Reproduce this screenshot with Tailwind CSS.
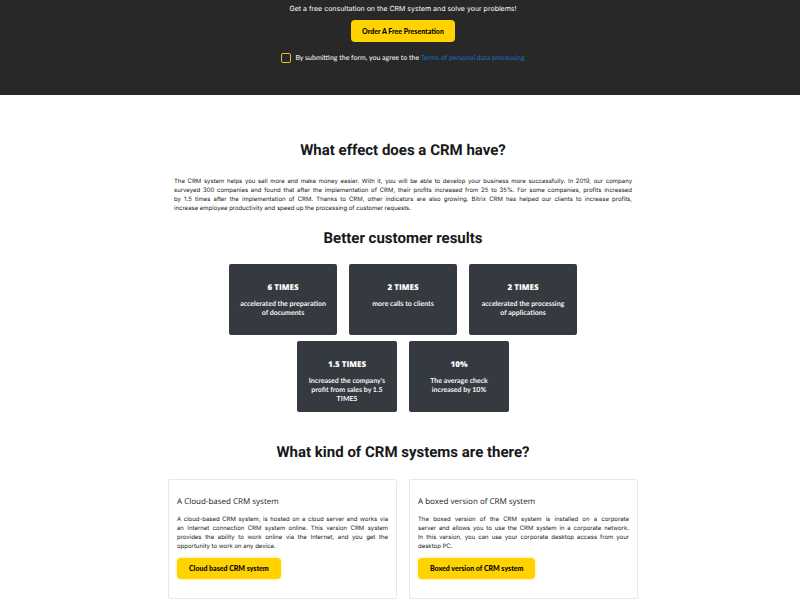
<!DOCTYPE html>
<html lang="en">
<head>
<meta charset="utf-8">
<meta name="viewport" content="width=device-width, initial-scale=1">
<title>CRM systems</title>
<script src="https://cdn.jsdelivr.net/npm/@tailwindcss/browser@4"></script>
</head>
<body class="bg-white font-['Roboto',sans-serif] text-[#16181a] [text-rendering:geometricPrecision]">
<header class="flex flex-col items-center bg-[#282828] pl-[6px] pt-[3px] pb-[32px] text-white">
  <p class="font-['Inter',sans-serif] text-[7px] leading-[12px]">Get a free consultation on the CRM system and solve your problems!</p>
  <button type="button" class="mt-[5px] h-[22px] rounded-[4px] bg-[#ffd200] px-[11px] font-['Lato',sans-serif] text-[7px] font-black text-black">Order A Free Presentation</button>
  <div class="mt-[11px] flex items-center gap-[4px] font-['Lato',sans-serif] text-[7px] leading-[10px]">
    <input id="agree" type="checkbox" class="size-[10px] appearance-none rounded-[2px] border border-[#e0bd35]">
    <span><label for="agree">By submitting the form, you agree to the</label> <a href="#" class="text-[#1272c4]">Terms of personal data processing</a></span>
  </div>
</header>
<main class="flex flex-col items-center pl-[6px]">
  <section class="flex w-full max-w-[458px] flex-col items-center pt-[46px]">
    <h2 class="text-[15px] leading-[18px] font-bold">What effect does a CRM have?</h2>
    <p class="mt-[18px] text-justify font-['Inter',sans-serif] text-[6px] leading-[9px]">The CRM system helps you sell more and make money easier. With it, you will be able to develop your business more successfully. In 2019, our company surveyed 300 companies and found that after the implementation of CRM, their profits increased from 25 to 35%. For some companies, profits increased by&nbsp;1.5&nbsp;times after the implementation of CRM. Thanks to CRM, other indicators are also growing. Bitrix CRM has helped our clients to increase profits, increase&nbsp;employee productivity and speed up the processing of customer requests.</p>
    <h2 class="mt-[16px] text-[15px] leading-[18px] font-bold">Better customer results</h2>
  </section>
  <section class="mt-[17px] flex flex-col items-center gap-[6px] text-center font-['Lato',sans-serif] text-[7px] leading-[9px] font-bold text-[#f4f4f4]">
    <div class="flex gap-[12px]">
      <article class="min-h-[71px] w-[108px] rounded-[2px] bg-[#343a40] px-[9px] pt-[19px]"><h3 class="mb-[8px] font-['Open_Sans',sans-serif] text-[8px] leading-[9px] font-extrabold text-white">6 TIMES</h3><p>accelerated the preparation of documents</p></article>
      <article class="min-h-[71px] w-[108px] rounded-[2px] bg-[#343a40] px-[9px] pt-[19px]"><h3 class="mb-[8px] font-['Open_Sans',sans-serif] text-[8px] leading-[9px] font-extrabold text-white">2 TIMES</h3><p>more calls to clients</p></article>
      <article class="min-h-[71px] w-[108px] rounded-[2px] bg-[#343a40] px-[9px] pt-[19px]"><h3 class="mb-[8px] font-['Open_Sans',sans-serif] text-[8px] leading-[9px] font-extrabold text-white">2 TIMES</h3><p>accelerated the processing of applications</p></article>
    </div>
    <div class="flex gap-[12px]">
      <article class="min-h-[71px] w-[100px] rounded-[2px] bg-[#343a40] px-[9px] pt-[19px]"><h3 class="mb-[8px] font-['Open_Sans',sans-serif] text-[8px] leading-[9px] font-extrabold text-white">1.5 TIMES</h3><p>Increased the company's profit from sales by 1.5 TIMES</p></article>
      <article class="min-h-[71px] w-[100px] rounded-[2px] bg-[#343a40] px-[9px] pt-[19px]"><h3 class="mb-[8px] font-['Open_Sans',sans-serif] text-[8px] leading-[9px] font-extrabold text-white">10%</h3><p>The average check increased by 10%</p></article>
    </div>
  </section>
  <section class="flex w-full max-w-[470px] flex-col items-center pt-[31px]">
    <h2 class="text-[15px] leading-[18px] font-bold">What kind of CRM systems are there?</h2>
    <div class="mt-[18px] grid w-full grid-cols-2 gap-[12px]">
      <article class="rounded-[2px] border border-[#e8e8e8] px-[8px] pt-[16px] pb-[19px]">
        <h3 class="font-['Open_Sans',sans-serif] text-[8px] leading-[12px]">A Cloud-based CRM system</h3>
        <p class="mt-[7px] text-justify font-['Inter',sans-serif] text-[6px] leading-[9px]">A cloud-based CRM system, is hosted on a cloud server and works via an&nbsp;Internet connection CRM system online. This version CRM system provides the ability to work online via the Internet, and you get the opportunity to work on any device.</p>
        <button type="button" class="mt-[7px] h-[21px] rounded-[4px] bg-[#ffd200] px-[12px] font-['Lato',sans-serif] text-[7px] font-black text-black shadow-[0_0_3px_#ffd20099]">Cloud based CRM system</button>
      </article>
      <article class="rounded-[2px] border border-[#e8e8e8] px-[8px] pt-[16px] pb-[19px]">
        <h3 class="font-['Open_Sans',sans-serif] text-[8px] leading-[12px]">A boxed version of CRM system</h3>
        <p class="mt-[7px] text-justify font-['Inter',sans-serif] text-[6px] leading-[9px]">The boxed version of the CRM system is installed on a corporate server&nbsp;and allows you to use the CRM system in a corporate network. In&nbsp;this&nbsp;version, you can use your corporate desktop access from your desktop&nbsp;PC.</p>
        <button type="button" class="mt-[7px] h-[21px] rounded-[4px] bg-[#ffd200] px-[12px] font-['Lato',sans-serif] text-[7px] font-black text-black shadow-[0_0_3px_#ffd20099]">Boxed version of CRM system</button>
      </article>
    </div>
  </section>
</main>
</body>
</html>
